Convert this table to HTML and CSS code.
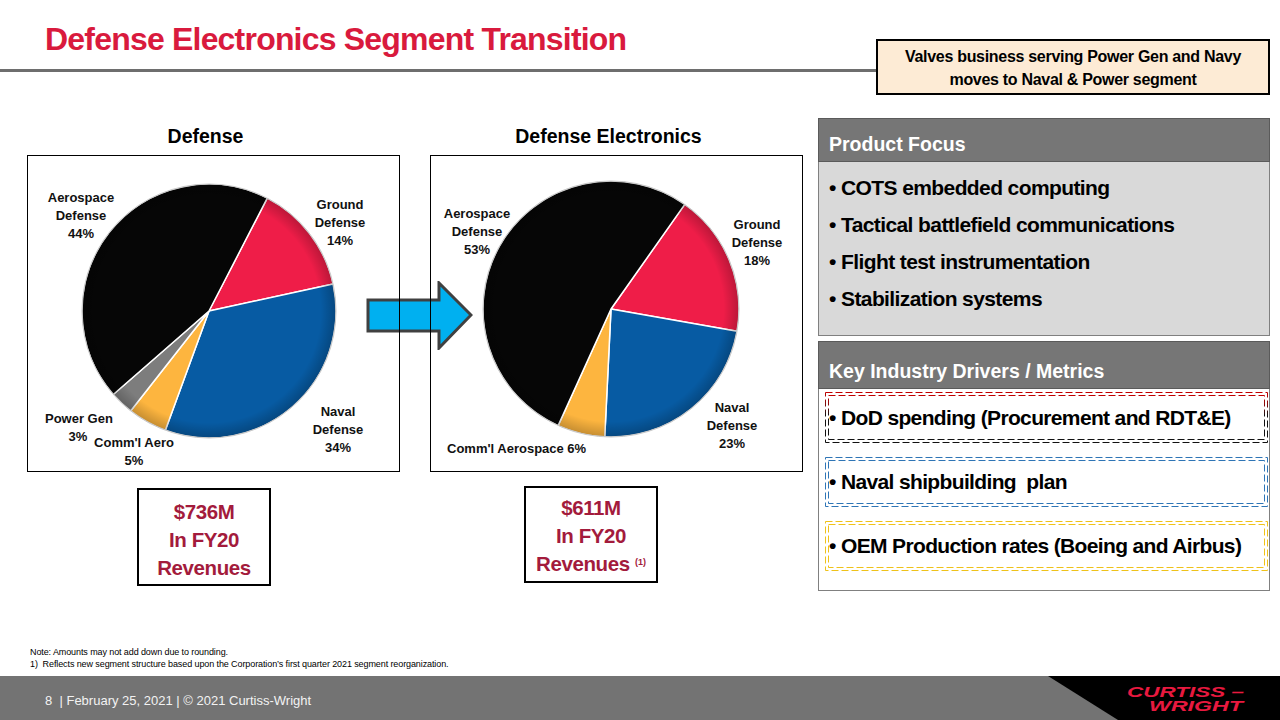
FILE: index.html
```html
<!DOCTYPE html>
<html lang="en">
<head>
<meta charset="utf-8">
<title>Defense Electronics Segment Transition</title>
<link rel="stylesheet" href="styles.css">
</head>
<body>
<div class="slide">
  <header class="top">
    <div class="title-col">
      <h1 class="title">Defense Electronics Segment Transition</h1>
      <div class="rule"></div>
    </div>
    <div class="callout">Valves business serving Power Gen and Navy<br>moves to Naval &amp; Power segment</div>
  </header>

  <main class="content">
    <section class="charts">
      <div class="chart-col">
        <h2 class="chart-title">Defense</h2>
        <div class="frame">
          <svg class="pie" width="371" height="315" viewBox="0 0 371 315">
            <defs>
              <radialGradient id="shadeL" cx="0.5" cy="0.5" r="0.5">
                <stop offset="0.88" stop-color="#000" stop-opacity="0"/>
                <stop offset="1" stop-color="#000" stop-opacity="0.22"/>
              </radialGradient>
            </defs>
            <g transform="translate(181,155)">
              <path class="s-red" d="M0 0 L58.25 -112.85 A127 127 0 0 1 124.08 -27.05 Z"/>
              <path class="s-blue" d="M0 0 L124.08 -27.05 A127 127 0 0 1 -43.65 119.26 Z"/>
              <path class="s-orange" d="M0 0 L-43.65 119.26 A127 127 0 0 1 -78.36 99.94 Z"/>
              <path class="s-gray" d="M0 0 L-78.36 99.94 A127 127 0 0 1 -95.71 83.49 Z"/>
              <path class="s-black" d="M0 0 L-95.71 83.49 A127 127 0 0 1 58.25 -112.85 Z"/>
              <circle class="shade" r="127" fill="url(#shadeL)"/>
            </g>
            <text class="lbl mid" x="53" y="46">Aerospace</text>
            <text class="lbl mid" x="53" y="64">Defense</text>
            <text class="lbl mid" x="53" y="82">44%</text>
            <text class="lbl mid" x="312" y="53">Ground</text>
            <text class="lbl mid" x="312" y="71">Defense</text>
            <text class="lbl mid" x="312" y="89">14%</text>
            <text class="lbl mid" x="310" y="260">Naval</text>
            <text class="lbl mid" x="310" y="278">Defense</text>
            <text class="lbl mid" x="310" y="296">34%</text>
            <text class="lbl" x="17" y="267">Power Gen</text>
            <text class="lbl mid" x="50" y="285">3%</text>
            <text class="lbl mid" x="106" y="291">Comm'l Aero</text>
            <text class="lbl mid" x="106" y="309">5%</text>
          </svg>
        </div>
        <div class="rev rev-left">$736M<br>In FY20<br>Revenues</div>
      </div>

      <div class="chart-col">
        <h2 class="chart-title">Defense Electronics</h2>
        <div class="frame">
          <svg class="pie" width="371" height="315" viewBox="0 0 371 315">
            <defs>
              <radialGradient id="shadeR" cx="0.5" cy="0.5" r="0.5">
                <stop offset="0.88" stop-color="#000" stop-opacity="0"/>
                <stop offset="1" stop-color="#000" stop-opacity="0.22"/>
              </radialGradient>
            </defs>
            <g transform="translate(180,153)">
              <path class="s-red" d="M0 0 L73.78 -104.59 A128 128 0 0 1 126.05 22.23 Z"/>
              <path class="s-blue" d="M0 0 L126.05 22.23 A128 128 0 0 1 -6.25 127.85 Z"/>
              <path class="s-orange" d="M0 0 L-6.25 127.85 A128 128 0 0 1 -52.88 116.57 Z"/>
              <path class="s-black" d="M0 0 L-52.88 116.57 A128 128 0 1 1 73.78 -104.59 Z"/>
              <circle class="shade" r="128" fill="url(#shadeR)"/>
            </g>
            <text class="lbl mid" x="46" y="62">Aerospace</text>
            <text class="lbl mid" x="46" y="80">Defense</text>
            <text class="lbl mid" x="46" y="98">53%</text>
            <text class="lbl mid" x="326" y="73">Ground</text>
            <text class="lbl mid" x="326" y="91">Defense</text>
            <text class="lbl mid" x="326" y="109">18%</text>
            <text class="lbl mid" x="301" y="256">Naval</text>
            <text class="lbl mid" x="301" y="274">Defense</text>
            <text class="lbl mid" x="301" y="292">23%</text>
            <text class="lbl" x="16" y="297">Comm'l Aerospace 6%</text>
          </svg>
        </div>
        <div class="rev rev-right">$611M<br>In FY20<br>Revenues <sup class="fn">(1)</sup></div>
      </div>

      <svg class="arrow" width="107" height="69" viewBox="0 0 107 69">
        <polygon points="2,19 73,19 73,2 105,34 73,67 73,50 2,50"/>
      </svg>
    </section>

    <aside class="panel">
      <div class="panel-head">Product Focus</div>
      <ul class="focus">
        <li>COTS embedded computing</li>
        <li>Tactical battlefield communications</li>
        <li>Flight test instrumentation</li>
        <li>Stabilization systems</li>
      </ul>
      <div class="panel-head panel-head-key">Key Industry Drivers / Metrics</div>
      <div class="drivers">
        <div class="dbox dbox-red">
          <svg class="dash-frame" width="443" height="51" viewBox="0 0 443 51">
            <defs>
              <linearGradient id="redfade" x1="0" y1="0" x2="0" y2="1">
                <stop offset="0" stop-color="#c00000"/>
                <stop offset="0.25" stop-color="#7a0d0d"/>
                <stop offset="0.45" stop-color="#111"/>
                <stop offset="1" stop-color="#111"/>
              </linearGradient>
            </defs>
            <rect x="0.5" y="0.5" width="442" height="50"/>
            <rect x="3.5" y="3.5" width="436" height="44"/>
          </svg>
          DoD spending (Procurement and RDT&amp;E)
        </div>
        <div class="dbox dbox-blue">
          <svg class="dash-frame" width="443" height="50" viewBox="0 0 443 50">
            <rect x="0.5" y="0.5" width="442" height="49"/>
            <rect x="3.5" y="3.5" width="436" height="43"/>
          </svg>
          Naval shipbuilding&nbsp; plan
        </div>
        <div class="dbox dbox-yellow">
          <svg class="dash-frame" width="443" height="50" viewBox="0 0 443 50">
            <rect x="0.5" y="0.5" width="442" height="49"/>
            <rect x="3.5" y="3.5" width="436" height="43"/>
          </svg>
          OEM Production rates (Boeing and Airbus)
        </div>
      </div>
    </aside>
  </main>

  <div class="notes">
    <p>Note: Amounts may not add down due to rounding.</p>
    <p>1)&nbsp; Reflects new segment structure based upon the Corporation’s first quarter 2021 segment reorganization.</p>
  </div>

  <footer class="footer">
    <span class="foot-text">8&nbsp; | February 25, 2021 | © 2021 Curtiss-Wright</span>
    <div class="brand">
      <svg width="232" height="44" viewBox="0 0 232 44">
        <text class="logo" x="79" y="21" textLength="117" lengthAdjust="spacingAndGlyphs">CURTISS –</text>
        <text class="logo" x="101" y="35" textLength="94" lengthAdjust="spacingAndGlyphs">WRIGHT</text>
      </svg>
    </div>
  </footer>
</div>
</body>
</html>
```

FILE: styles.css
```css
html, body {
  margin: 0;
  padding: 0;
  background: #fff;
}

body {
  width: 1280px;
  height: 720px;
  overflow: hidden;
  font-family: "Liberation Sans", Arial, sans-serif;
  color: #000;
}

.slide {
  width: 1280px;
  height: 720px;
  display: flex;
  flex-direction: column;
}

/* ---------- header ---------- */
.top {
  display: flex;
  height: 95px;
  flex: none;
}

.title-col {
  width: 876px;
}

.title {
  margin: 0;
  padding: 21px 0 0 45px;
  height: 35px;
  line-height: 36px;
  font-weight: bold;
  font-size: 32px;
  letter-spacing: -0.8px;
  color: #d91a3d;
  white-space: nowrap;
}

.rule {
  margin-top: 13px;
  height: 3px;
  background: #6e6e6e;
}

.callout {
  box-sizing: border-box;
  margin-top: 39px;
  width: 394px;
  height: 56px;
  border: 2px solid #000;
  background: #fdebd5;
  padding-top: 4px;
  text-align: center;
  font-weight: bold;
  font-size: 16px;
  line-height: 23px;
  letter-spacing: -0.3px;
  white-space: nowrap;
}

/* ---------- content ---------- */
.content {
  display: flex;
  margin-top: 23px;
  height: 473px;
  padding-left: 27px;
  flex: none;
}

.charts {
  position: relative;
  z-index: 0;
  display: flex;
  gap: 30px;
}

.chart-col {
  width: 373px;
}

.chart-title {
  margin: 0 0 7px;
  padding: 6px 16px 0 0;
  height: 24px;
  line-height: 24px;
  text-align: center;
  font-size: 19.5px;
  font-weight: bold;
}

.frame {
  box-sizing: border-box;
  width: 373px;
  height: 317px;
  border: 1px solid #000;
}

.pie {
  display: block;
}

.s-red { fill: #ef1d48; }
.s-blue { fill: #075ba3; }
.s-orange { fill: #fdb53f; }
.s-gray { fill: #7d7d7d; }
.s-black { fill: #060606; }

.pie path {
  stroke: #fff;
  stroke-width: 1.5;
  stroke-linejoin: round;
}

.shade {
  stroke: #c8c8c8;
  stroke-width: 1;
}

.lbl {
  font-family: "Liberation Sans", Arial, sans-serif;
  font-weight: bold;
  font-size: 13px;
  fill: #111;
}

.mid {
  text-anchor: middle;
}

.rev {
  box-sizing: border-box;
  width: 134px;
  height: 98px;
  margin-top: 16px;
  border: 2px solid #000;
  padding-top: 8px;
  text-align: center;
  font-weight: bold;
  font-size: 20.5px;
  line-height: 28px;
  letter-spacing: -0.4px;
  color: #a31b3c;
  white-space: nowrap;
}

.rev-left { margin-left: 110px; }
.rev-right { margin-left: 94px; margin-top: 14px; height: 97px; padding-top: 6px; }

.fn {
  font-size: 9px;
  vertical-align: 6px;
  line-height: 0;
  letter-spacing: 0;
}

.arrow {
  position: absolute;
  left: 339px;
  top: 163px;
  z-index: -1;
}

.arrow polygon {
  fill: #00b0f0;
  stroke: #404040;
  stroke-width: 3;
  stroke-linejoin: miter;
}

/* ---------- right panel ---------- */
.panel {
  width: 452px;
  margin-left: 15px;
  display: flex;
  flex-direction: column;
}

.panel-head {
  box-sizing: border-box;
  height: 44px;
  padding: 13px 10px 0;
  line-height: 24px;
  background: #767676;
  border: 1px solid #5a5a5a;
  color: #fff;
  font-size: 19.5px;
  font-weight: bold;
}

.panel-head-key {
  margin-top: 5px;
  height: 48px;
  padding-top: 17px;
}

.focus {
  box-sizing: border-box;
  margin: 0;
  height: 174px;
  padding: 7px 10px 0;
  list-style: none;
  background: #d9d9d9;
  border: 1px solid #808080;
  border-top: 0;
}

.focus li {
  line-height: 37px;
  font-weight: bold;
  font-size: 21px;
  letter-spacing: -0.6px;
  white-space: nowrap;
}

.focus li::before {
  content: "•";
  display: inline-block;
  width: 12px;
}

.drivers {
  box-sizing: border-box;
  height: 202px;
  padding: 3px 1px 0 6px;
  border: 1px solid #808080;
  border-top: 0;
  display: flex;
  flex-direction: column;
  gap: 14px;
}

.dbox {
  position: relative;
  box-sizing: border-box;
  height: 50px;
  display: flex;
  align-items: center;
  padding-left: 4px;
  font-weight: bold;
  font-size: 21px;
  letter-spacing: -0.65px;
  white-space: nowrap;
}

.dbox::before {
  content: "•";
  display: inline-block;
  width: 12px;
}

.dash-frame {
  position: absolute;
  left: 0;
  top: 0;
  pointer-events: none;
}

.dash-frame rect {
  fill: none;
  stroke-width: 1;
  stroke-dasharray: 7 3;
}

.dbox-red {
  height: 51px;
}

.dbox-red rect {
  stroke: url(#redfade);
}

.dbox-blue rect {
  stroke: #2e75b6;
}

.dbox-yellow rect {
  stroke: #efc21a;
}

/* ---------- notes & footer ---------- */
.notes {
  margin-top: auto;
  margin-bottom: 6px;
  padding-left: 30px;
  font-size: 9px;
  line-height: 12px;
  letter-spacing: -0.1px;
}

.notes p {
  margin: 0;
}

.footer {
  flex: none;
  height: 44px;
  display: flex;
  align-items: center;
  justify-content: space-between;
  background: #737373;
  padding-left: 45px;
}

.foot-text {
  color: #f2f2f2;
  font-size: 13px;
  padding-top: 4px;
}

.brand {
  align-self: stretch;
  width: 232px;
  background: #000;
  clip-path: polygon(0 0, 100% 0, 100% 100%, 70px 100%);
}

.brand svg {
  display: block;
}

.logo {
  font-family: "Liberation Sans", Arial, sans-serif;
  font-weight: bold;
  font-style: italic;
  font-size: 14.5px;
  fill: #e8193f;
}
```
